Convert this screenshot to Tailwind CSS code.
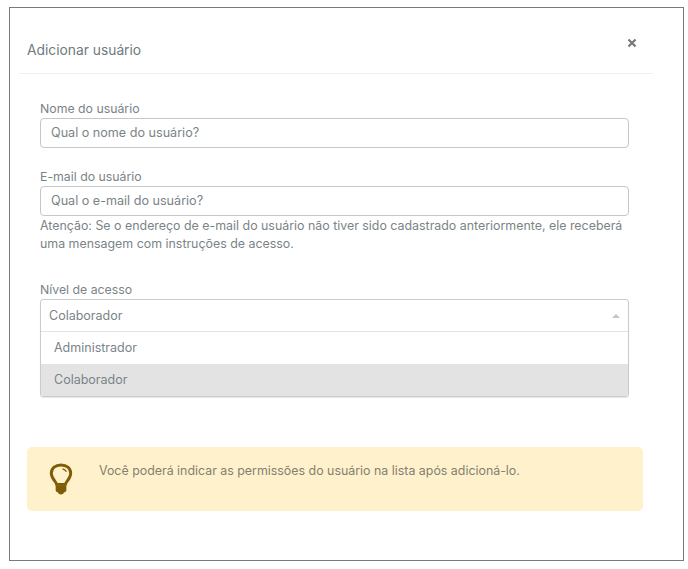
<!DOCTYPE html>
<html lang="pt-BR">
<head>
<meta charset="utf-8">
<title>Adicionar usuário</title>
<script src="https://cdn.jsdelivr.net/npm/@tailwindcss/browser@4"></script>
</head>
<body class="bg-white font-['Inter',sans-serif] text-[#7a8487]">
<div class="w-[688px] h-[569px] pt-[7px] pl-[9px] overflow-hidden">
  <div class="relative w-[675px] h-[554px] border border-[#777b7e] bg-white pl-[17px]">
    <button class="absolute left-[617px] top-[30px] w-[10px] h-[10px] flex" aria-label="Fechar">
      <svg viewBox="0 0 10 10" class="w-[10px] h-[10px]"><path d="M1.500 1.500 8.500 8.500M8.500 1.500 1.500 8.500" stroke="#75797b" stroke-width="2.200" fill="none"/></svg>
    </button>
    <div class="w-[634px] h-[66px] pt-[33px] border-b border-[#f0f0f0] -ml-[8px]">
      <h2 class="ml-[8px] text-[13.8px] leading-[18px] font-normal text-[#6f7a7d]">Adicionar usuário</h2>
    </div>
    <form class="pl-[13px] w-[603px] pt-[27px]">
      <label class="block text-[12.3px] leading-[16px]">Nome do usuário</label>
      <div class="mt-[1px] h-[30px] w-[589px] rounded-[4px] border border-[#c4c6c7] pl-[10px] flex items-center text-[12.6px]">Qual o nome do usuário?</div>

      <label class="block mt-[21px] text-[12.3px] leading-[16px]">E-mail do usuário</label>
      <div class="mt-[1px] h-[30px] w-[589px] rounded-[4px] border border-[#c4c6c7] pl-[10px] flex items-center text-[12.6px]">Qual o e-mail do usuário?</div>
      <p class="mt-[1px] w-[589px] text-[12.4px] leading-[18px] whitespace-nowrap">Atenção: Se o endereço de e-mail do usuário não tiver sido cadastrado anteriormente, ele receberá<br>uma mensagem com instruções de acesso.</p>

      <label class="block mt-[29px] text-[12.3px] leading-[16px]">Nível de acesso</label>
      <div class="mt-[1px] w-[589px] rounded-[3px] border border-[#c9cbcc] text-[12.5px] overflow-hidden shadow-[0_1px_1px_rgba(0,0,0,0.1)]">
        <div class="h-[32px] pt-[1px] flex items-center justify-between pl-[8px] pr-[8px] border-b border-[#e2e3e4]">
          <span>Colaborador</span>
          <span class="w-0 h-0 border-l-[4px] border-r-[4px] border-b-[4px] border-l-transparent border-r-transparent border-b-[#c3c6c8]"></span>
        </div>
        <div class="h-[32px] flex items-center pl-[13px]">Administrador</div>
        <div class="h-[32px] flex items-center pl-[13px] bg-[#e3e3e3]">Colaborador</div>
      </div>
    </form>
    <div class="mt-[50px] w-[616px] h-[64px] rounded-[5px] bg-[#fff1cc] flex items-start pl-[22px] pt-[15px]">
      <svg viewBox="0 0 24 34" class="w-[24px] h-[33px] shrink-0 mt-[1px]" fill="none">
        <path d="M7.500 22c-.3-3-5.500-5.500-5.500-11.500C2 5.300 6.400 2 12 2s10 3.300 10 8.500c0 6-5.200 8.500-5.500 11.500z" stroke="#7f5c06" stroke-width="3"/>
        <path d="M13.500 6c2 .3 3.500 1.400 4 3.200" stroke="#7f5c06" stroke-width="1.200"/>
        <path d="M6.500 23h11v5c0 1.500-1.500 2-2.500 2.500-.5 1.500-1.500 2-3 2s-2.500-.5-3-2c-1-.5-2.500-1-2.500-2.500z" fill="#7f5c06"/>
      </svg>
      <p class="ml-[26px] text-[12.4px] leading-[18px] whitespace-nowrap text-[#84806f]">Você poderá indicar as permissões do usuário na lista após adicioná-lo.</p>
    </div>
  </div>
</div>
</body>
</html>
